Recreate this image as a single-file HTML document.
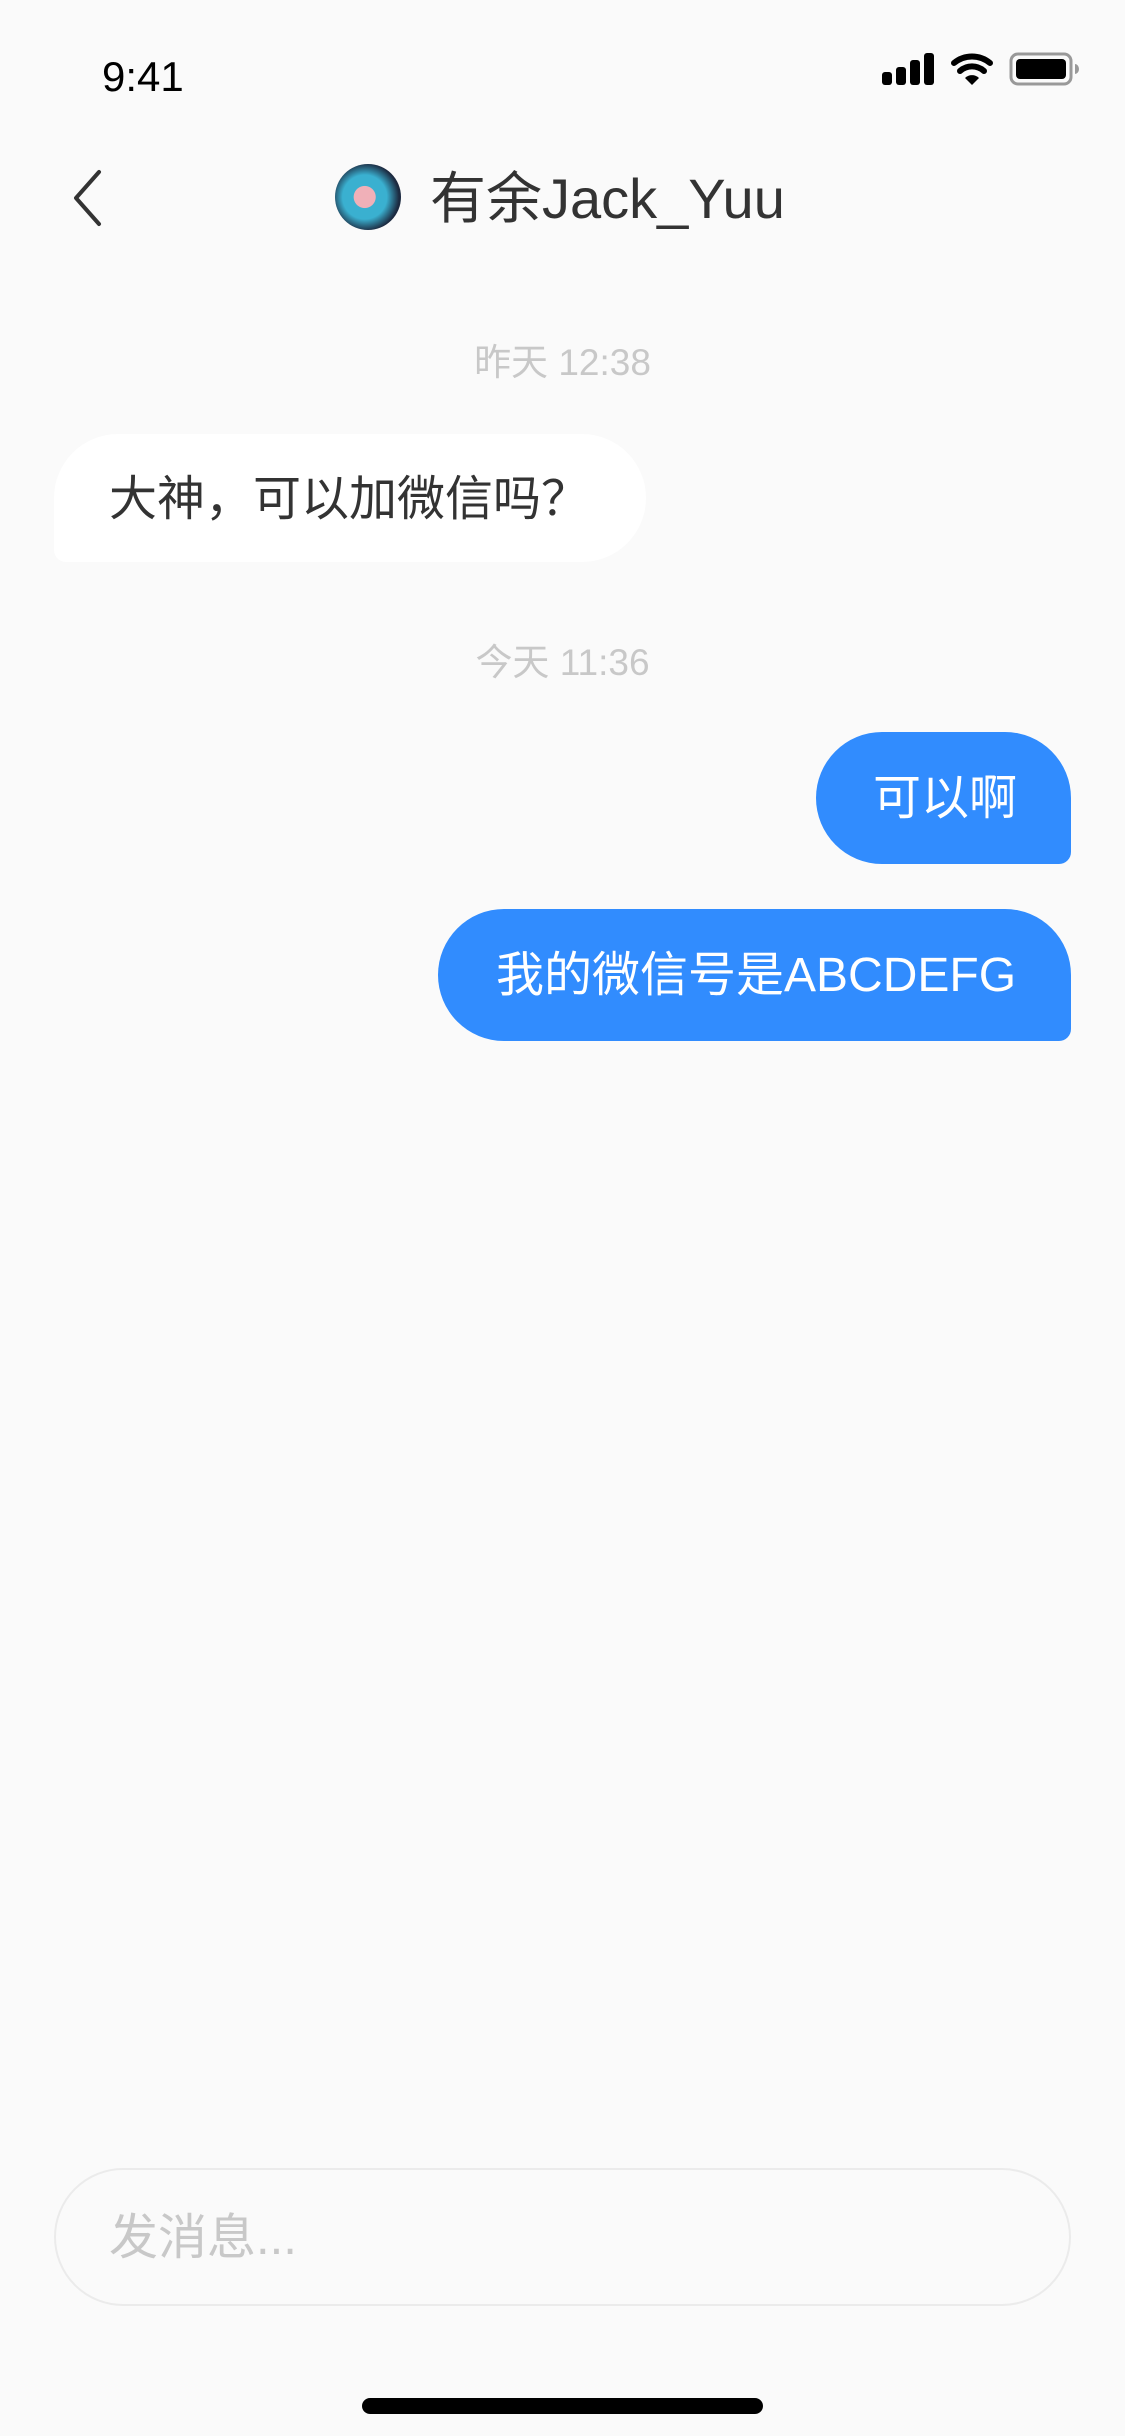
<!DOCTYPE html>
<html><head><meta charset="utf-8"><style>
body{margin:0;width:1125px;height:2436px;background:#fafafa;position:relative;overflow:hidden;font-family:"Liberation Sans","Noto Sans CJK SC",sans-serif}
.a{position:absolute}
.t{white-space:nowrap}
</style></head><body>
<div class="a t" style="left:102px;top:52px;font-size:42px;line-height:50px;color:#000">9:41</div>
<svg class="a" style="left:880px;top:50px" width="205" height="40" viewBox="0 0 205 40">
<rect x="2" y="22" width="10" height="13" rx="3" fill="#000"/>
<rect x="16" y="17" width="10" height="18" rx="3" fill="#000"/>
<rect x="30" y="10" width="10" height="25" rx="3" fill="#000"/>
<rect x="44" y="3" width="10" height="32" rx="3" fill="#000"/>
<path d="M74 13 A28 28 0 0 1 110 13" stroke="#000" stroke-width="6" fill="none" stroke-linecap="round"/>
<path d="M80 21 A18 18 0 0 1 104 21" stroke="#000" stroke-width="6" fill="none" stroke-linecap="round"/>
<path d="M85 28 L92 35 L99 28 A10 10 0 0 0 85 28Z" fill="#000"/>
<rect x="131" y="4" width="60" height="30" rx="7" fill="none" stroke="#999" stroke-width="3"/>
<rect x="136" y="9" width="50" height="20" rx="4" fill="#000"/>
<path d="M195 14 a4 5 0 0 1 0 10Z" fill="#999"/>
</svg>
<svg class="a" style="left:66px;top:168px" width="40" height="60"><path d="M33 4 L10 30 L33 56" stroke="#333" stroke-width="4" fill="none" stroke-linecap="round" stroke-linejoin="round"/></svg>
<div class="a" style="left:335px;top:164px;width:66px;height:66px;border-radius:50%;background:radial-gradient(circle at 45% 50%,#f0b0b8 0 22%,#3ab0d0 23% 45%,#1c2a40 70%)"></div>
<div class="a t" style="left:430px;top:168px;font-size:56px;line-height:62px;color:#333">有余Jack_Yuu</div>
<div class="a t" style="left:0;width:1125px;text-align:center;top:343px;font-size:37px;line-height:40px;color:#c8c8c8">昨天 12:38</div>
<div class="a" style="left:54px;top:434px;width:592px;height:128px;background:#fff;border-radius:64px 64px 64px 12px"></div>
<div class="a t" style="left:109px;top:472px;font-size:48px;line-height:56px;color:#333">大神，可以加微信吗？</div>
<div class="a t" style="left:0;width:1125px;text-align:center;top:643px;font-size:37px;line-height:40px;color:#c8c8c8">今天 11:36</div>
<div class="a" style="left:816px;top:732px;width:255px;height:132px;background:#318cfe;border-radius:66px 66px 12px 66px"></div>
<div class="a t" style="left:873px;top:771px;font-size:48px;line-height:56px;color:#fff">可以啊</div>
<div class="a" style="left:438px;top:909px;width:633px;height:132px;background:#318cfe;border-radius:66px 66px 12px 66px"></div>
<div class="a t" style="left:496px;top:948px;font-size:48px;line-height:56px;color:#fff">我的微信号是ABCDEFG</div>
<div class="a" style="left:54px;top:2168px;width:1013px;height:134px;border:2px solid #ebebeb;border-radius:70px;background:#fafafa"></div>
<div class="a t" style="left:109px;top:2210px;font-size:49px;line-height:56px;color:#c8c8c8">发消息...</div>
<div class="a" style="left:362px;top:2398px;width:401px;height:16px;border-radius:8px;background:#000"></div>
</body></html>
